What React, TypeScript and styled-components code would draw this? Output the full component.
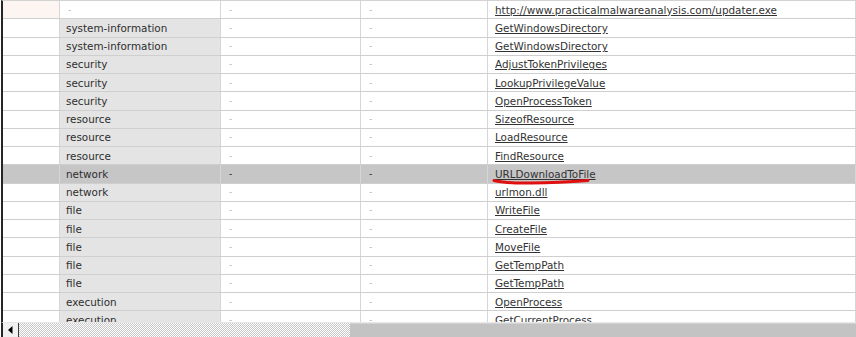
import styled, { createGlobalStyle } from 'styled-components';

const GlobalStyle = createGlobalStyle`
  html, body {
    margin: 0;
    padding: 0;
    background: #ffffff;
  }
  body {
    font-family: "DejaVu Sans", Verdana, sans-serif;
  }
`;

const Frame = styled.div`
  width: 856px;
  height: 337px;
  display: flex;
  flex-direction: column;
  overflow: hidden;
  background: #fff;
`;

const Body = styled.div`
  flex: 1;
  overflow: hidden;
  margin-left: 1px;
  border-left: 2px solid #262626;
  border-top: 1px solid #d2d2d2;
`;

const Row = styled.div<{ $selected?: boolean }>`
  display: grid;
  grid-template-columns: 57px 161px 140px 127px 1fr;
  height: 18.25px;
  box-sizing: border-box;
  border-bottom: 1px solid #cfcfcf;
  background: ${(p) => (p.$selected ? '#c6c6c6' : '#ffffff')};
`;

const Cell = styled.div<{ $bg?: string; $selected?: boolean }>`
  position: relative;
  display: flex;
  align-items: center;
  padding-left: 6px;
  border-right: 1px solid #d6d6d6;
  background: ${(p) => (p.$selected ? '#c6c6c6' : p.$bg || 'transparent')};
  font-size: 10.4px;
  color: #2e2e2e;
  white-space: nowrap;
  overflow: visible;
`;

const Dash = styled.span<{ $dark?: boolean }>`
  padding-left: 2px;
  color: ${(p) => (p.$dark ? '#111' : '#b4b4b4')};
  font-size: 9px;
`;

const Link = styled.span`
  padding-left: 1px;
  color: #333333;
  text-decoration: underline;
  text-underline-offset: 1px;
`;

const Scribble = styled.svg`
  position: absolute;
  left: 4px;
  top: 13px;
  pointer-events: none;
`;

const ScrollBar = styled.div`
  height: 14px;
  display: flex;
  border-top: 1px solid #e6e6e6;
  margin-left: 1px;
  border-left: 2px solid #262626;
`;

const ArrowButton = styled.div`
  width: 15px;
  display: flex;
  align-items: center;
  justify-content: center;
  background: #f0f0f0;
  border-right: 1px solid #3a3a3a;
`;

const Track = styled.div`
  width: 331px;
  background-color: #ffffff;
  background-image: repeating-conic-gradient(#c8c8c8 0 25%, #ffffff 0 50%);
  background-size: 2px 2px;
`;

const Thumb = styled.div`
  flex: 1;
  background: #c3c3c3;
  border-top: 1px solid #d4d4d4;
`;

type Entry = { cat: string; api: string };

const rows: Entry[] = [
  { cat: '', api: 'http://www.practicalmalwareanalysis.com/updater.exe' },
  { cat: 'system-information', api: 'GetWindowsDirectory' },
  { cat: 'system-information', api: 'GetWindowsDirectory' },
  { cat: 'security', api: 'AdjustTokenPrivileges' },
  { cat: 'security', api: 'LookupPrivilegeValue' },
  { cat: 'security', api: 'OpenProcessToken' },
  { cat: 'resource', api: 'SizeofResource' },
  { cat: 'resource', api: 'LoadResource' },
  { cat: 'resource', api: 'FindResource' },
  { cat: 'network', api: 'URLDownloadToFile' },
  { cat: 'network', api: 'urlmon.dll' },
  { cat: 'file', api: 'WriteFile' },
  { cat: 'file', api: 'CreateFile' },
  { cat: 'file', api: 'MoveFile' },
  { cat: 'file', api: 'GetTempPath' },
  { cat: 'file', api: 'GetTempPath' },
  { cat: 'execution', api: 'OpenProcess' },
  { cat: 'execution', api: 'GetCurrentProcess' },
];

const SELECTED = 9;

export default function App() {
  return (
    <Frame>
      <GlobalStyle />
      <Body>
        {rows.map((r, i) => {
          const sel = i === SELECTED;
          return (
            <Row key={i} $selected={sel}>
              <Cell $bg={i === 0 ? '#fdf5f1' : '#ffffff'} $selected={sel} />
              <Cell $bg={r.cat ? '#e4e4e4' : '#ffffff'} $selected={sel}>
                {r.cat ? r.cat : <Dash>-</Dash>}
              </Cell>
              <Cell $selected={sel}>
                <Dash $dark={sel}>-</Dash>
              </Cell>
              <Cell $selected={sel}>
                <Dash $dark={sel}>-</Dash>
              </Cell>
              <Cell $selected={sel}>
                <Link>{r.api}</Link>
                {sel && (
                  <Scribble width="100" height="8" viewBox="0 0 100 8">
                    <path
                      d="M2 2.5 Q 14 5.5 40 5 T 96 2.5"
                      fill="none"
                      stroke="#e01010"
                      strokeWidth="3"
                      strokeLinecap="round"
                    />
                  </Scribble>
                )}
              </Cell>
            </Row>
          );
        })}
      </Body>
      <ScrollBar>
        <ArrowButton>
          <svg width="5" height="8" viewBox="0 0 5 8">
            <path d="M4.5 0 L0 4 L4.5 8 Z" fill="#000" />
          </svg>
        </ArrowButton>
        <Track />
        <Thumb />
      </ScrollBar>
    </Frame>
  );
}
